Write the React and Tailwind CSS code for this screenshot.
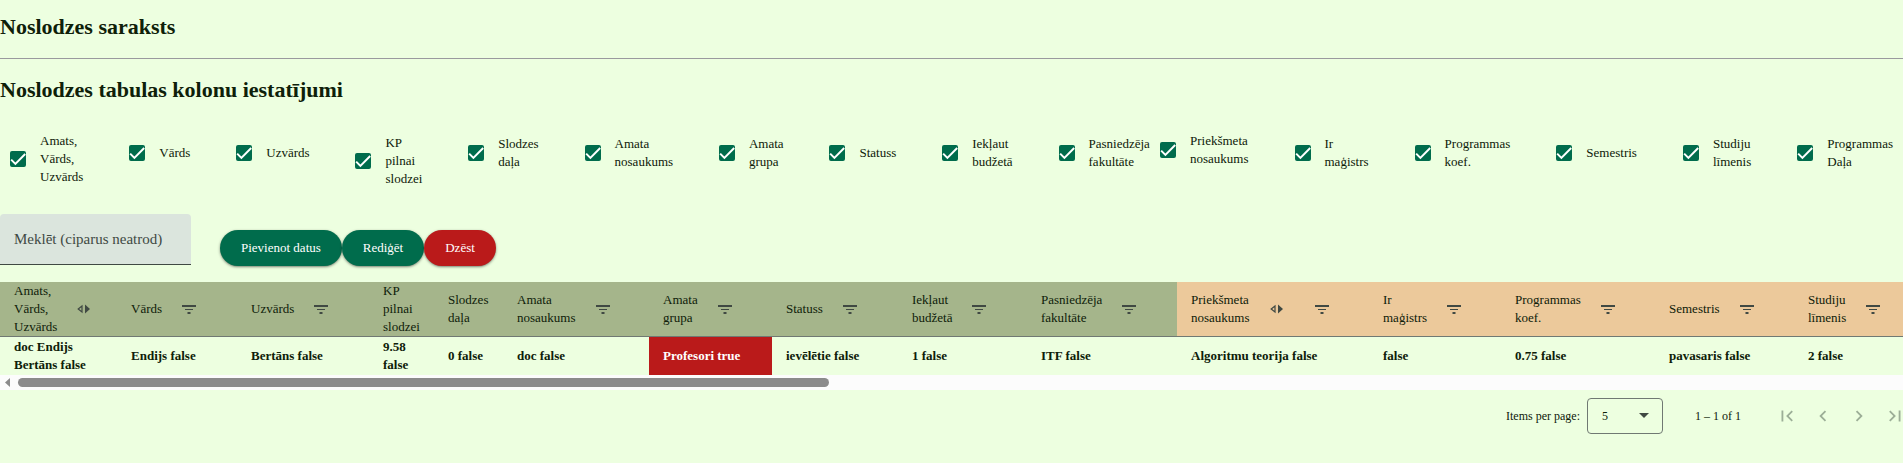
import React from "react";

const Check = ({ lines }) => (
  <label className="flex cursor-pointer items-center gap-[14px] pl-[10px]">
    <span className="relative flex size-4 shrink-0">
      <input
        type="checkbox"
        defaultChecked
        className="peer size-4 appearance-none rounded-[2px] border-2 border-[#404943] checked:border-[#006c4c] checked:bg-[#006c4c]"
      />
      <svg
        viewBox="0 0 24 24"
        className="pointer-events-none absolute inset-0 hidden size-4 peer-checked:block"
        fill="none"
        stroke="#ffffff"
        strokeWidth="3"
      >
        <path d="M1.73,12.91 8.1,19.28 22.79,4.59" />
      </svg>
    </span>
    <span>
      {lines.map((line) => (
        <span key={line} className="block whitespace-nowrap">
          {line}
        </span>
      ))}
    </span>
  </label>
);

const CheckGroup = ({ lead, items, className }) => (
  <div className={`flex items-start ${className}`}>
    <div className="mr-9 shrink-0">
      <Check lines={lead} />
    </div>
    <ul className="flex flex-1 items-start justify-between pt-px">
      {items.map((lines) => (
        <li key={lines.join(" ")} className="flex min-h-10 items-center py-px">
          <Check lines={lines} />
        </li>
      ))}
    </ul>
  </div>
);

const FilterIcon = () => (
  <svg viewBox="0 0 14 10" className="h-[10px] w-[14px]" fill="#404943">
    <path d="M0 1h14v2H0zM3 5h8v1H3zM5.5 8h3v2h-3z" />
  </svg>
);

const UnfoldIcon = () => (
  <svg viewBox="0 0 13 10" className="h-[10px] w-[13px]">
    <path d="M5 2 1.2 5 5 8z" fill="none" stroke="#404943" strokeWidth="1.2" />
    <path d="M8 0.5 13 5 8 9.5z" fill="#404943" />
  </svg>
);

const COLUMNS = [
  { w: "w-[117px]", head: ["Amats,", "Vārds,", "Uzvārds"], unfold: true, cell: "doc Endijs Bertāns false" },
  { w: "w-[120px]", head: ["Vārds"], filter: true, cell: "Endijs false" },
  { w: "w-[132px]", head: ["Uzvārds"], filter: true, cell: "Bertāns false" },
  { w: "w-[65px]", head: ["KP", "pilnai", "slodzei"], cell: "9.58 false" },
  { w: "w-[69px]", head: ["Slodzes", "daļa"], cell: "0 false" },
  { w: "w-[146px]", head: ["Amata", "nosaukums"], filter: true, cell: "doc false" },
  { w: "w-[123px]", head: ["Amata", "grupa"], filter: true, cell: "Profesori true", alert: true },
  { w: "w-[126px]", head: ["Statuss"], filter: true, cell: "ievēlētie false" },
  { w: "w-[129px]", head: ["Iekļaut", "budžetā"], filter: true, cell: "1 false" },
  { w: "w-[150px]", head: ["Pasniedzēja", "fakultāte"], filter: true, cell: "ITF false" },
  { w: "w-[192px]", head: ["Priekšmeta", "nosaukums"], unfold: true, filter: true, cell: "Algoritmu teorija false", subject: true },
  { w: "w-[132px]", head: ["Ir", "maģistrs"], filter: true, cell: "false", subject: true },
  { w: "w-[154px]", head: ["Programmas", "koef."], filter: true, cell: "0.75 false", subject: true },
  { w: "w-[139px]", head: ["Semestris"], filter: true, cell: "pavasaris false", subject: true },
  { w: "", head: ["Studiju", "līmenis"], filter: true, cell: "2 false", subject: true },
];

const PageButton = ({ label, d }) => (
  <button type="button" disabled aria-label={label} className="flex size-9 items-center justify-center">
    <svg viewBox="0 0 24 24" className="size-[22px]" fill="#9cae97">
      <path d={d} />
    </svg>
  </button>
);

export default function App() {
  return (
    <div className="min-h-screen overflow-hidden bg-[#edffe0] font-['Liberation_Serif',serif] text-[13px] leading-[18px] text-[#0e2009]">
      <h1 className="pt-[13px] text-[22px] leading-7 font-bold">Noslodzes saraksts</h1>
      <hr className="mt-[17px] border-t border-[#9a9a9e]" />
      <h2 className="mt-[17px] text-[22px] leading-7 font-bold">Noslodzes tabulas kolonu iestatījumi</h2>

      <div className="mt-[28px] grid grid-cols-[1150fr_753fr]">
        <CheckGroup
          lead={["Amats,", "Vārds,", "Uzvārds"]}
          items={[
            ["Vārds"],
            ["Uzvārds"],
            ["KP", "pilnai", "slodzei"],
            ["Slodzes", "daļa"],
            ["Amata", "nosaukums"],
            ["Amata", "grupa"],
            ["Statuss"],
            ["Iekļaut", "budžetā"],
            ["Pasniedzēja", "fakultāte"],
          ]}
          className=""
        />
        <CheckGroup
          lead={["Priekšmeta", "nosaukums"]}
          items={[
            ["Ir", "maģistrs"],
            ["Programmas", "koef."],
            ["Semestris"],
            ["Studiju", "līmenis"],
            ["Programmas", "Daļa"],
          ]}
          className="pr-[10px]"
        />
      </div>

      <div className="mt-[25px] flex items-start gap-[29px]">
        <input
          type="text"
          aria-label="Meklēt (ciparus neatrod)"
          placeholder="Meklēt (ciparus neatrod)"
          className="h-[51px] w-[191px] rounded-t-[4px] border-b border-[#404943] bg-[#dbe5dd] px-[14px] text-[15px] placeholder:text-[#404943] placeholder:opacity-100"
        />
        <div className="flex pt-4 text-[13px] text-white text-shadow-[0_0_1px_#ffffff,0_0_1px_#ffffff]">
          <button type="button" className="h-9 rounded-full bg-[#006c4c] px-[21px] shadow-sm shadow-black/40">
            Pievienot datus
          </button>
          <button type="button" className="h-9 rounded-full bg-[#006c4c] px-[21px] shadow-sm shadow-black/40">
            Rediģēt
          </button>
          <button type="button" className="h-9 rounded-full bg-[#ba1a1a] px-[21px] shadow-sm shadow-black/40">
            Dzēst
          </button>
        </div>
      </div>

      <table className="mt-4 w-full table-fixed border-collapse text-left">
        <thead>
          <tr className="border-b border-[#707973]">
            {COLUMNS.map((c) => (
              <th
                key={c.head.join(" ")}
                className={`${c.w} ${c.subject ? "bg-[#ecc99b]" : "bg-[#a5b58b]"} h-[54px] p-0 pl-[14px] align-middle font-normal`}
              >
                <div className="flex items-center gap-5 whitespace-nowrap">
                  <span>
                    {c.head.map((line) => (
                      <span key={line} className="block">
                        {line}
                      </span>
                    ))}
                  </span>
                  <span className="flex items-center gap-8">
                    {c.unfold && <UnfoldIcon />}
                    {c.filter && <FilterIcon />}
                  </span>
                </div>
              </th>
            ))}
          </tr>
        </thead>
        <tbody>
          <tr>
            {COLUMNS.map((c) => (
              <td
                key={c.head.join(" ")}
                className={`h-[38px] p-0 pl-[14px] font-bold ${c.alert ? "bg-[#ba1a1a] text-white" : ""}`}
              >
                {c.cell}
              </td>
            ))}
          </tr>
        </tbody>
      </table>

      <div className="flex h-[15px] items-center gap-2 bg-[#fcfcfc] pl-[5px]">
        <svg viewBox="0 0 5 9" className="h-[9px] w-[5px]" fill="#8b8b8b">
          <path d="M5 0v9L0 4.5z" />
        </svg>
        <div className="flex-1">
          <div className="h-[9px] w-[43%] rounded-full bg-[#8b8b8b]" />
        </div>
      </div>

      <div className="flex items-center justify-end pt-2 text-[12px]">
        <label htmlFor="page-size" className="mr-[7px]">
          Items per page:
        </label>
        <span className="relative flex items-center">
          <select
            id="page-size"
            defaultValue="5"
            className="h-9 w-[76px] appearance-none rounded-[4px] border border-[#707973] bg-transparent pl-[14px]"
          >
            <option>5</option>
            <option>10</option>
            <option>20</option>
          </select>
          <svg viewBox="0 0 10 5" className="pointer-events-none absolute right-[14px] h-[5px] w-[10px]" fill="#404943">
            <path d="M0 0h10L5 5z" />
          </svg>
        </span>
        <span className="mr-7 ml-8">1 – 1 of 1</span>
        <div className="-mr-[10px] flex">
          <PageButton label="First page" d="M18.41 16.59L13.82 12l4.59-4.59L17 6l-6 6 6 6zM6 6h2v12H6z" />
          <PageButton label="Previous page" d="M15.41 7.41L14 6l-6 6 6 6 1.41-1.41L10.83 12z" />
          <PageButton label="Next page" d="M10 6L8.59 7.41 13.17 12l-4.58 4.59L10 18l6-6z" />
          <PageButton label="Last page" d="M5.59 7.41L10.18 12l-4.59 4.59L7 18l6-6-6-6zM16 6h2v12h-2z" />
        </div>
      </div>
    </div>
  );
}
